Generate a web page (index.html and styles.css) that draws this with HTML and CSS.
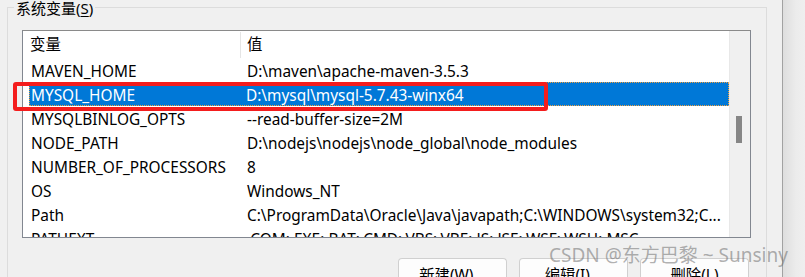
FILE: index.html
```html
<!DOCTYPE html>
<html lang="zh-CN">

<head>
    <meta charset="UTF-8">
    <title>系统变量</title>
    <link rel="stylesheet" href="styles.css">
</head>

<body>
    <div class="window">
        <div class="group">
            <div class="legend">系统变量(<u>S</u>)</div>
            <div class="listbox">
                <div class="table">
                    <div class="head">
                        <div class="hcol1">变量</div>
                        <div class="hcol2">值</div>
                    </div>
                    <div class="row"><span class="name">MAVEN_HOME</span><span class="val">D:\maven\apache-maven-3.5.3</span></div>
                    <div class="row selected"><span class="name">MYSQL_HOME</span><span class="val">D:\mysql\mysql-5.7.43-winx64</span></div>
                    <div class="row"><span class="name">MYSQLBINLOG_OPTS</span><span class="val">--read-buffer-size=2M</span></div>
                    <div class="row"><span class="name">NODE_PATH</span><span class="val">D:\nodejs\nodejs\node_global\node_modules</span></div>
                    <div class="row"><span class="name">NUMBER_OF_PROCESSORS</span><span class="val">8</span></div>
                    <div class="row"><span class="name">OS</span><span class="val">Windows_NT</span></div>
                    <div class="row"><span class="name">Path</span><span class="val">C:\ProgramData\Oracle\Java\javapath;C:\WINDOWS\system32;C...</span></div>
                    <div class="row"><span class="name">PATHEXT</span><span class="val">.COM;.EXE;.BAT;.CMD;.VBS;.VBE;.JS;.JSE;.WSF;.WSH;.MSC</span></div>
                </div>
                <div class="scrollbar">
                    <div class="thumb"></div>
                </div>
            </div>
            <div class="buttons">
                <div class="btn">新建(<u>W</u>)...</div>
                <div class="btn">编辑(<u>I</u>)...</div>
                <div class="btn">删除(<u>L</u>)</div>
            </div>
        </div>
    </div>
    <div class="shadow"></div>

    <!-- annotation + watermark drawn over the dialog -->
    <div class="mark"></div>
    <div class="watermark">CSDN @东方巴黎 ~ Sunsiny</div>
</body>

</html>
```

FILE: styles.css
```css
html {
    overflow: hidden;
}

body {
    margin: 0;
    width: 805px;
    height: 277px;
    overflow: hidden;
    background: #f0f0f0;
    font-family: "Noto Sans", "Noto Sans CJK SC", sans-serif;
    font-size: 15.4px;
    color: #000;
    display: flex;
    position: relative;
}

.window {
    width: 782px;
    border-right: 1px solid #a2a2a2;
    flex: none;
}

.shadow {
    flex: 1;
    background: linear-gradient(to right, #dedede, #ececec 60%, #efefef);
}

.group {
    position: relative;
    margin: 7px 0 0 7px;
    width: 758px;
    height: 269px;
    border: 1px solid #dcdcdc;
    border-bottom: none;
}

.legend {
    position: absolute;
    top: -9px;
    left: 6px;
    padding: 0 2px;
    background: #f0f0f0;
    font-size: 15px;
    line-height: 18px;
}

.legend u,
.btn u {
    text-underline-offset: 2px;
}

.listbox {
    margin: 22px 0 0 14px;
    width: 727px;
    height: 206px;
    border: 1px solid #828790;
    border-top-color: #8a8a8a;
    background: #fff;
    display: flex;
    overflow: hidden;
}

.table {
    width: 706px;
    flex: none;
    overflow: hidden;
}

.head {
    display: flex;
    height: 26px;
    padding-top: 1px;
    line-height: 26px;
}

.hcol1 {
    width: 210px;
    padding-left: 7px;
    border-right: 1px solid #e5e5e5;
}

.hcol2 {
    flex: 1;
    padding-left: 6px;
}

.row {
    display: flex;
    height: 22px;
    padding-top: 2px;
    line-height: 24px;
    margin-left: 6px;
    white-space: nowrap;
}

.name {
    width: 214px;
    padding-left: 2px;
    flex: none;
}

.val {
    padding-left: 2px;
    overflow: hidden;
}

.selected {
    background: #0078d7;
    color: #fff;
    box-sizing: border-box;
    height: 24px;
    padding-top: 1px;
    border: 1px dotted #f0a040;
    line-height: 23px;
}

.selected .name {
    width: 213px;
    padding-left: 1px;
}

.scrollbar {
    flex: 1;
    background: #f0f0f0;
    border-left: 1px solid #e8e8e8;
}

.thumb {
    width: 6px;
    height: 27px;
    margin: 85px 0 0 6px;
    background: #868686;
}

.buttons {
    display: flex;
    justify-content: flex-end;
    gap: 12px;
    margin-top: 20px;
    padding-right: 17px;
}

.btn {
    width: 107px;
    height: 20px;
    border: 1px solid #d0d0d0;
    border-bottom: none;
    border-radius: 4px 4px 0 0;
    background: #fdfdfd;
    text-align: center;
    line-height: 34px;
    overflow: hidden;
}

.mark {
    position: absolute;
    left: 13px;
    top: 82px;
    width: 535px;
    height: 29px;
    box-sizing: border-box;
    border: 4px solid #f41d1d;
    border-radius: 3px;
}

.watermark {
    position: absolute;
    left: 549px;
    top: 243px;
    font-size: 19px;
    line-height: 24px;
    white-space: nowrap;
    color: rgba(110, 110, 110, 0.55);
}
```
